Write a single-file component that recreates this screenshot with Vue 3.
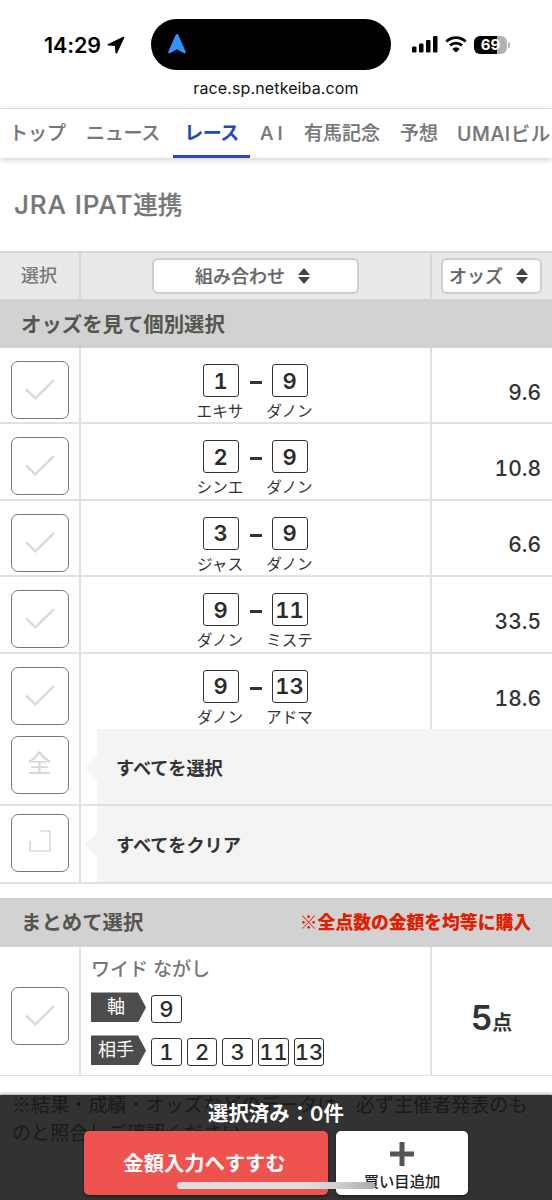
<template>
  <div class="page">
    <header class="status">
      <div class="status__left">
        <span class="status__time">14:29</span>
        <svg class="status__location" viewBox="0 0 18 18">
          <path d="M16.200.8 1.100 7.900c-1 .5-.8 1.700.3 1.700l6.500.5.5 6.500c0 1.200 1.300 1.400 1.800.3L17.200 1.900c.3-.8-.2-1.500-1-1.100z" />
        </svg>
      </div>
      <div class="status__island">
        <svg viewBox="0 0 18 20">
          <path d="M9 0C8.300 0 7.900.3 7.600 1L.4 17.600c-.6 1.500.7 2.300 2 1.500L9 15.200l6.600 3.900c1.300.8 2.600 0 2-1.500L10.400 1C10.100.3 9.700 0 9 0z" />
        </svg>
      </div>
      <svg class="status__signal" viewBox="0 0 26 17">
        <rect x="0" y="10.500" width="4.500" height="6" rx="1.200" />
        <rect x="7" y="7.500" width="4.500" height="9" rx="1.200" />
        <rect x="14" y="4" width="4.500" height="12.500" rx="1.200" />
        <rect x="21" y="0" width="4.500" height="16.500" rx="1.200" />
      </svg>
      <svg class="status__wifi" viewBox="0 0 22 17">
        <path d="M1.300 5.600a14 14 0 0 1 19.400 0M5 9.600a8.700 8.700 0 0 1 12 0" />
        <path class="status__wifi-dot" d="M11 16.500 7.300 12.900a5.200 5.200 0 0 1 7.400 0z" />
      </svg>
      <div class="status__battery"><span>69</span></div>
    </header>
    <div class="url">race.sp.netkeiba.com</div>

    <nav class="nav">
      <a
        v-for="item in navItems"
        :key="item.label"
        class="nav__item"
        :class="[`nav__item--${item.id}`, { 'nav__item--active': item.active }]"
      >{{ item.label }}</a>
    </nav>

    <h1 class="title"><span>JRA IPAT</span>連携</h1>

    <div class="row row--head">
      <div class="cell cell--check">選択</div>
      <div class="cell cell--main">
        <button class="sort sort--wide">
          組み合わせ
          <svg viewBox="0 0 12 16"><path d="M6 0l6 7H0zM0 9h12l-6 7z" /></svg>
        </button>
      </div>
      <div class="cell cell--side">
        <button class="sort">
          オッズ
          <svg viewBox="0 0 12 16"><path d="M6 0l6 7H0zM0 9h12l-6 7z" /></svg>
        </button>
      </div>
    </div>

    <div class="section">オッズを見て個別選択</div>

    <div class="bets">
      <div v-for="(bet, i) in bets" :key="i" class="row row--bet">
        <div class="cell cell--check">
          <div class="check">
            <svg viewBox="0 0 30 22"><path d="M1.200 10.500l9.200 8.800L28.800 1.200" /></svg>
          </div>
        </div>
        <div class="cell cell--main">
          <div class="horse">
            <span class="num">{{ bet.a }}</span>
            <span class="horse__name">{{ bet.nameA }}</span>
          </div>
          <i class="dash"></i>
          <div class="horse horse--second">
            <span class="num">{{ bet.b }}</span>
            <span class="horse__name">{{ bet.nameB }}</span>
          </div>
        </div>
        <div class="cell cell--side odds">{{ bet.odds }}</div>
      </div>
    </div>

    <div class="row row--bulk">
      <div class="cell cell--check">
        <div class="check check--all">全</div>
      </div>
      <div class="bulk">すべてを選択</div>
    </div>
    <div class="row row--bulk">
      <div class="cell cell--check">
        <div class="check check--clear">
          <svg viewBox="0 0 22 22"><path d="M11.500 1H21v20H1V11" /></svg>
        </div>
      </div>
      <div class="bulk">すべてをクリア</div>
    </div>

    <div class="section section--group">
      <span>まとめて選択</span>
      <strong class="section__note"><span>※</span>全点数の金額を均等に購入</strong>
    </div>

    <div class="row row--group">
      <div class="cell cell--check">
        <div class="check">
          <svg viewBox="0 0 30 22"><path d="M1.200 10.500l9.200 8.800L28.800 1.200" /></svg>
        </div>
      </div>
      <div class="cell cell--main group">
        <div class="group__type">ワイド ながし</div>
        <div v-for="line in lines" :key="line.label" class="group__line">
          <span class="tag">{{ line.label }}</span>
          <span v-for="n in line.nums" :key="n" class="num num--small">{{ n }}</span>
        </div>
      </div>
      <div class="cell cell--side points"><b>5</b>点</div>
    </div>

    <p class="notice">※結果・成績・オッズなどのデータは、必ず主催者発表のものと照合しご確認ください。</p>

    <footer class="bar">
      <div class="bar__count">選択済み：<span>0</span>件</div>
      <div class="bar__buttons">
        <button class="btn btn--go">金額入力へすすむ</button>
        <button class="btn btn--add">
          <svg viewBox="0 0 24 24"><path d="M12 0v24M0 12h24" /></svg>
          買い目追加
        </button>
      </div>
      <div class="bar__home"></div>
    </footer>
  </div>
</template>

<script setup>
const navItems = [
  { id: 'top', label: 'トップ' },
  { id: 'news', label: 'ニュース' },
  { id: 'race', label: 'レース', active: true },
  { id: 'ai', label: 'AI' },
  { id: 'arima', label: '有馬記念' },
  { id: 'yoso', label: '予想' },
  { id: 'umai', label: 'UMAIビル' }
]

const bets = [
  { a: 1, nameA: 'エキサ', b: 9, nameB: 'ダノン', odds: '9.6' },
  { a: 2, nameA: 'シンエ', b: 9, nameB: 'ダノン', odds: '10.8' },
  { a: 3, nameA: 'ジャス', b: 9, nameB: 'ダノン', odds: '6.6' },
  { a: 9, nameA: 'ダノン', b: 11, nameB: 'ミステ', odds: '33.5' },
  { a: 9, nameA: 'ダノン', b: 13, nameB: 'アドマ', odds: '18.6' }
]

const lines = [
  { label: '軸', nums: [9] },
  { label: '相手', nums: [1, 2, 3, 11, 13] }
]
</script>

<style>
body {
  background: #fff;
  overflow: hidden;
}
</style>

<style scoped>
* {
  box-sizing: border-box;
}

.page {
  position: relative;
  width: 552px;
  height: 1200px;
  overflow: hidden;
  font-family: Inter, 'Noto Sans CJK JP', sans-serif;
  color: #333;
}

button {
  font-family: inherit;
  margin: 0;
  padding: 0;
}

svg {
  display: block;
  flex: none;
}

.status {
  display: flex;
  align-items: center;
  height: 70px;
  padding: 19px 0 0 44px;
}

.status__left {
  display: flex;
  align-items: center;
  width: 107px;
}

.status__time {
  width: 63px;
  font-size: 21.500px;
  font-weight: 600;
  letter-spacing: -0.1px;
  color: #000;
}

.status__location {
  width: 18px;
  height: 18px;
}

.status__island {
  display: flex;
  align-items: center;
  width: 240px;
  height: 51px;
  padding-left: 17px;
  border-radius: 26px;
  background: #000;
}

.status__island svg {
  width: 18px;
  height: 20px;
  margin-bottom: 2px;
  fill: #2f95fb;
}

.status__signal {
  width: 26px;
  height: 17px;
  margin-left: 21px;
}

.status__wifi {
  width: 22px;
  height: 17px;
  margin-left: 7px;
  fill: none;
  stroke: #000;
  stroke-width: 2.800;
}

.status__wifi-dot {
  fill: #000;
  stroke: none;
}

.status__battery {
  position: relative;
  width: 33px;
  height: 18px;
  margin-left: 7px;
  border-radius: 6px;
  background: linear-gradient(90deg, #000 0 69%, #b2b2b2 69%);
  color: #fff;
  font-size: 15px;
  font-weight: 700;
  line-height: 18px;
  text-align: center;
}

.status__battery::after {
  content: '';
  position: absolute;
  left: 34px;
  top: 6px;
  width: 2px;
  height: 6px;
  border-radius: 0 3px 3px 0;
  background: #b2b2b2;
}

.url {
  height: 38px;
  line-height: 37px;
  font-size: 16px;
  text-align: center;
  color: #111;
  letter-spacing: 0.12px;
}

.nav {
  display: flex;
  height: 50px;
  padding-left: 9px;
  border-top: 1px solid #d8d8d8;
  box-shadow: 0 2px 6px rgba(0, 0, 0, 0.18);
  white-space: nowrap;
}

.nav__item {
  flex: none;
  height: 49px;
  color: #777;
  font-size: 19px;
  font-weight: 500;
  line-height: 50px;
  -webkit-text-stroke: 0.2px currentColor;
}

.nav__item--top {
  width: 77px;
}

.nav__item--news {
  width: 87px;
  letter-spacing: -0.3px;
}

.nav__item--race {
  width: 77px;
  text-align: center;
  letter-spacing: -0.6px;
}

.nav__item--ai {
  width: 54px;
  padding-left: 10px;
  letter-spacing: 4px;
}

.nav__item--arima {
  width: 96px;
}

.nav__item--yoso {
  width: 57px;
}

.nav__item--umai {
  font-size: 19.500px;
  letter-spacing: 0.6px;
}

.nav__item--active {
  border-bottom: 3px solid #2449b8;
  color: #2449b8;
  font-weight: 700;
  -webkit-text-stroke: 0;
}

.title {
  height: 93px;
  margin: 0;
  padding-left: 14px;
  font-size: 24.500px;
  font-weight: 500;
  line-height: 94px;
  color: #777;
  -webkit-text-stroke: 0.200px currentColor;
}

.title span {
  font-size: 26px;
  letter-spacing: 0.9px;
}

.row {
  display: flex;
  border-bottom: 2px solid #e1e1e1;
}

.cell {
  flex: none;
  display: flex;
}

.cell--check {
  width: 81px;
  border-right: 2px solid #e1e1e1;
  padding-left: 10.500px;
}

.cell--main {
  width: 351px;
  border-right: 2px solid #e1e1e1;
}

.cell--side {
  width: 120px;
}

.row--head {
  height: 48px;
  border-top: 2px solid #d8d8d8;
  border-bottom: 0;
  background: #e9e9e9;
  color: #777;
  font-size: 18px;
  font-weight: 500;
}

.row--head .cell {
  border-color: #d8d8d8;
  align-items: center;
}

.row--head .cell--check {
  padding: 0 0 4px 21px;
}

.row--head .cell--main {
  padding-left: 71px;
}

.row--head .cell--side {
  padding-left: 9px;
}

.sort {
  display: flex;
  align-items: center;
  justify-content: center;
  width: 101px;
  height: 36px;
  padding: 0 6px 2px 0;
  border: 2px solid #cecece;
  border-radius: 6px;
  background: #fff;
  color: #666;
  font-size: 18px;
  font-weight: 500;
  white-space: nowrap;
  -webkit-text-stroke: 0.2px currentColor;
}

.sort--wide {
  width: 207px;
}

.sort svg {
  width: 12px;
  height: 16px;
  margin: 2px 0 0 13px;
  fill: #444;
  stroke: none;
}

.section {
  display: flex;
  justify-content: space-between;
  align-items: center;
  height: 49px;
  padding: 0 21px 2px 21px;
  background: #d2d2d2;
  color: #55554e;
  font-size: 20.400px;
  font-weight: 700;
}

.section--group {
  margin-top: 14px;
}

.section__note {
  color: #e02000;
  font-family: 'Noto Sans CJK JP', sans-serif;
  font-size: 17.800px;
}

.section__note span {
  font-weight: 400;
}

.row--bet {
  height: 76.400px;
}

.row--bet:last-child {
  height: 75.400px;
  border-bottom: 0;
}

.row--bet .cell--check {
  padding-top: 13px;
}

.check {
  display: flex;
  align-items: center;
  justify-content: center;
  width: 58px;
  height: 58px;
  border: 1px solid #777;
  border-radius: 7px;
  color: #d4d4d4;
  fill: none;
  stroke: #dadada;
  stroke-width: 2.500;
}

.check svg {
  width: 30px;
  height: 22px;
}

.check--all {
  font-size: 24px;
  font-weight: 400;
  line-height: 1;
  padding-bottom: 2px;
}

.check--clear svg {
  width: 22px;
  height: 22px;
  margin-bottom: 3px;
  stroke-width: 1.700;
}

.row--bet .cell--main {
  padding: 16px 0 0 114px;
}

.horse {
  display: flex;
  flex-direction: column;
  align-items: center;
  width: 51px;
}

.horse--second {
  margin-left: 2px;
}

.num {
  display: flex;
  flex: none;
  align-items: center;
  justify-content: center;
  width: 36px;
  height: 33px;
  border: 1.500px solid #333;
  border-radius: 3px;
  color: #2b2b2b;
  font-size: 22px;
  font-weight: 600;
  line-height: 1;
  font-feature-settings: 'tnum';
}

.horse__name {
  flex: none;
  height: 28px;
  font-size: 15.600px;
  line-height: 29px;
  white-space: nowrap;
}

.horse:first-child .horse__name {
  margin-left: -1px;
}

.dash {
  width: 12px;
  height: 3px;
  margin: 17px 0 0 4px;
  background: #333;
}

.odds {
  align-items: center;
  justify-content: flex-end;
  padding: 14px 11px 0 0;
  font-size: 21px;
  font-weight: 550;
  font-feature-settings: 'tnum';
}

.row--bulk {
  height: 77.500px;
}

.row--bulk .cell--check {
  padding-top: 7.500px;
}

.bulk {
  position: relative;
  flex: 1;
  margin-left: 16px;
  padding-left: 19px;
  background: #f4f4f4;
  font-size: 18.200px;
  font-weight: 700;
  line-height: 79px;
}

.bulk::before {
  content: '';
  position: absolute;
  left: -12px;
  top: 27px;
  border: 12px solid transparent;
  border-left-width: 0;
  border-right-color: #f4f4f4;
}

.row--group {
  height: 129px;
  border-bottom-width: 1px;
}

.row--group .cell--check {
  padding-top: 40px;
}

.group {
  flex-direction: column;
  padding: 9px 0 0 10px;
}

.group__type {
  flex: none;
  height: 36px;
  color: #777;
  font-size: 19px;
  font-weight: 500;
  line-height: 28px;
}

.group__line {
  display: flex;
  flex: none;
  align-items: center;
  height: 31px;
  margin-bottom: 12px;
}

.tag {
  width: 55px;
  height: 30px;
  margin-right: 5px;
  padding-right: 5px;
  background: #4c4c4c;
  clip-path: polygon(0 0, 47px 0, 100% 50%, 47px 100%, 0 100%);
  color: #fff;
  font-size: 18px;
  line-height: 29px;
  text-align: center;
}

.num--small {
  width: 30.700px;
  height: 28px;
  margin: 3px 5px 0 0;
  font-weight: 500;
}

.points {
  align-items: baseline;
  justify-content: center;
  padding: 50px 1px 0 0;
  font-size: 20px;
  font-weight: 700;
}

.points b {
  font-size: 34px;
  font-weight: 600;
  line-height: 41px;
}

.notice {
  margin: 14px 10px 0 12px;
  color: #444;
  font-family: 'Noto Sans CJK JP', sans-serif;
  font-size: 19.100px;
  line-height: 28px;
}

.bar {
  position: absolute;
  left: 0;
  right: 0;
  bottom: 0;
  height: 105px;
  background: rgba(20, 20, 21, 0.87);
  box-shadow: 0 -1px 3px rgba(0, 0, 0, 0.4);
}

.bar__count {
  height: 36px;
  color: #fff;
  font-size: 20.400px;
  font-weight: 700;
  line-height: 38px;
  text-align: center;
}

.bar__count span {
  font-weight: 600;
}

.bar__buttons {
  display: flex;
  justify-content: center;
  gap: 8px;
}

.btn {
  height: 64px;
  border: 0;
  border-radius: 5px;
  box-shadow: 0 1px 3px rgba(0, 0, 0, 0.5);
}

.btn--go {
  width: 244px;
  padding: 0 3px 3px 0;
  background: #ef5350;
  color: #fff;
  font-size: 20.300px;
  font-weight: 700;
}

.btn--add {
  display: flex;
  flex-direction: column;
  align-items: center;
  width: 132px;
  padding-top: 11px;
  background: #fff;
  color: #222;
  font-size: 15.300px;
  font-weight: 500;
  line-height: 31px;
}

.btn--add svg {
  width: 24px;
  height: 24px;
  stroke: #555;
  stroke-width: 5;
}

.bar__home {
  position: absolute;
  left: 177px;
  bottom: 11px;
  width: 198px;
  height: 7px;
  border-radius: 4px;
  background: linear-gradient(90deg, #dedede 0 65%, #cecece 82%, #a9a9a9);
}
</style>
